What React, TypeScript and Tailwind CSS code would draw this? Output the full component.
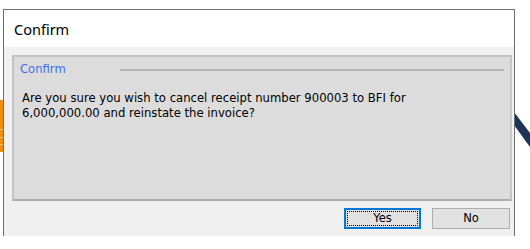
import React from "react";

export default function App() {
  return (
    <div className="relative w-[530px] h-[249px] bg-white overflow-hidden" style={{ fontFamily: '"Liberation Sans", Arial, sans-serif' }}>
      {/* background fragments behind the dialog */}
      <div className="absolute left-0 top-[100px] w-[3px] h-[52px] bg-[#f28c0f]">
        <div className="mt-[29px] h-px bg-[#f7c07a]" />
        <div className="mt-[7px] h-px bg-[#f7c07a]" />
        <div className="mt-[6px] h-px bg-[#f7c07a]" />
      </div>
      <svg className="absolute left-[514px] top-[100px]" width="16" height="60" viewBox="0 0 16 60">
        <polygon points="0,12 0,25 16,47 16,33" fill="#1d3358" />
      </svg>

      <div className="relative ml-[3px] mt-[9px] w-[512px] h-[227px] border-l border-r border-t border-[#6e6e6e] flex flex-col">
        <div className="h-[37px] bg-white flex items-center pl-[10px] pt-[2px]">
          <span className="text-[14.5px] text-black" style={{ fontFamily: '"Noto Sans", "Open Sans", sans-serif' }}>Confirm</span>
        </div>
        <div className="flex-1 bg-[#f0f0f0] flex flex-col pl-[8px] pr-[2px] pt-[8px]">
          <div className="h-[146px] bg-[#dcdcdc] border-2 border-t-[#c2c2c2] border-l-[#c2c2c2] border-r-[#c6c6c6] border-b-[#acacac] flex flex-col">
            <div className="flex items-start h-[24px] pl-[6px]">
              <span className="mt-[5px] leading-[15px] text-[#3f6ff0]" style={{ fontFamily: '"DejaVu Sans", sans-serif', fontSize: '11.6px' }}>Confirm</span>
              <div className="ml-[54px] mr-[6px] flex-1 h-[2px] bg-[#b4b4b4] mt-[12px]" />
            </div>
            <div className="pl-[8px] pt-[10px] leading-[15px] text-black" style={{ fontFamily: '"DejaVu Sans", sans-serif', fontSize: '11.65px' }}>
              Are you sure you wish to cancel receipt number 900003 to BFI for
              <br />
              6,000,000.00 and reinstate the invoice?
            </div>
          </div>
          <div className="flex justify-end gap-[11px] mt-[7px] pr-[2px]">
            <button className="w-[77px] h-[21px] bg-[#e1e1e1] border-2 border-[#0078d7] p-px flex">
              <div className="flex-1 border border-dotted border-black flex items-center justify-center text-black leading-none" style={{ fontFamily: '"DejaVu Sans", sans-serif', fontSize: '11.5px' }}>
                Yes
              </div>
            </button>
            <button className="w-[78px] h-[21px] bg-[#e1e1e1] border border-[#adadad] flex items-center justify-center text-black leading-none" style={{ fontFamily: '"DejaVu Sans", sans-serif', fontSize: '11.5px' }}>
              No
            </button>
          </div>
        </div>
      </div>
    </div>
  );
}
